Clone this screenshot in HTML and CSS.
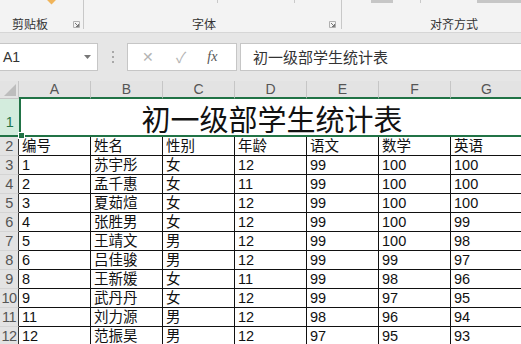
FILE: index.html
```html
<!DOCTYPE html>
<html lang="zh-CN">

<head>
    <meta charset="UTF-8">
    <meta name="viewport" content="width=device-width, initial-scale=1.0">
    <title>初一级部学生统计表</title>

    <link rel="stylesheet" href="styles.css">
</head>

<body>
    <div class="ribbon">
        <div class="group group-clip">
            <div class="stubs"><span class="paste-tip"></span></div>
            <div class="group-foot">
                <span class="label">剪贴板</span>
                <svg class="launcher" width="7" height="7" viewBox="0 0 7 7"><path d="M0.5 6.5V0.5H6.5V6.5Z" fill="none" stroke="#b0b0b0"/><path d="M2 2L5.5 5.5M3 5.5H5.5V3" fill="none" stroke="#777"/></svg>
            </div>
        </div>
        <div class="group group-font">
            <div class="stubs"><span class="tick t1"></span><span class="tick t2"></span></div>
            <div class="group-foot">
                <span class="label">字体</span>
                <svg class="launcher" width="7" height="7" viewBox="0 0 7 7"><path d="M0.5 6.5V0.5H6.5V6.5Z" fill="none" stroke="#b0b0b0"/><path d="M2 2L5.5 5.5M3 5.5H5.5V3" fill="none" stroke="#777"/></svg>
            </div>
        </div>
        <div class="group group-align">
            <div class="stubs"><span class="bar b1"></span><span class="tick t3"></span><span class="bar b2"></span></div>
            <div class="group-foot">
                <span class="label">对齐方式</span>
            </div>
        </div>
    </div>

    <div class="formula-bar">
        <div class="name-box">
            <span>A1</span>
            <svg width="7" height="4" viewBox="0 0 7 4"><path d="M0 0H7L3.5 4Z" fill="#777"/></svg>
        </div>
        <div class="dots"><i></i><i></i><i></i></div>
        <div class="fx-box">
            <span class="fx-cancel">✕</span>
            <span class="fx-ok">✓</span>
            <span class="fx">fx</span>
        </div>
        <div class="fx-input">初一级部学生统计表</div>
    </div>

    <div class="sheet">
        <div class="corner"><svg width="12" height="12" viewBox="0 0 12 12"><path d="M12 0V12H0Z" fill="#bdbdbd"/></svg></div>
        <div class="col-head">A</div>
        <div class="col-head">B</div>
        <div class="col-head">C</div>
        <div class="col-head">D</div>
        <div class="col-head">E</div>
        <div class="col-head">F</div>
        <div class="col-head">G</div>

        <div class="row-head active">1</div>
        <div class="title-cell">初一级部学生统计表</div>

        <div class="row-head">2</div>
        <div class="cell">编号</div><div class="cell">姓名</div><div class="cell">性别</div><div class="cell">年龄</div><div class="cell">语文</div><div class="cell">数学</div><div class="cell">英语</div>

        <div class="row-head">3</div>
        <div class="cell">1</div><div class="cell">苏宇彤</div><div class="cell">女</div><div class="cell">12</div><div class="cell">99</div><div class="cell">100</div><div class="cell">100</div>

        <div class="row-head">4</div>
        <div class="cell">2</div><div class="cell">孟千惠</div><div class="cell">女</div><div class="cell">11</div><div class="cell">99</div><div class="cell">100</div><div class="cell">100</div>

        <div class="row-head">5</div>
        <div class="cell">3</div><div class="cell">夏茹煊</div><div class="cell">女</div><div class="cell">12</div><div class="cell">99</div><div class="cell">100</div><div class="cell">100</div>

        <div class="row-head">6</div>
        <div class="cell">4</div><div class="cell">张胜男</div><div class="cell">女</div><div class="cell">12</div><div class="cell">99</div><div class="cell">100</div><div class="cell">99</div>

        <div class="row-head">7</div>
        <div class="cell">5</div><div class="cell">王靖文</div><div class="cell">男</div><div class="cell">12</div><div class="cell">99</div><div class="cell">100</div><div class="cell">98</div>

        <div class="row-head">8</div>
        <div class="cell">6</div><div class="cell">吕佳骏</div><div class="cell">男</div><div class="cell">12</div><div class="cell">99</div><div class="cell">99</div><div class="cell">97</div>

        <div class="row-head">9</div>
        <div class="cell">8</div><div class="cell">王新媛</div><div class="cell">女</div><div class="cell">11</div><div class="cell">99</div><div class="cell">98</div><div class="cell">96</div>

        <div class="row-head">10</div>
        <div class="cell">9</div><div class="cell">武丹丹</div><div class="cell">女</div><div class="cell">12</div><div class="cell">99</div><div class="cell">97</div><div class="cell">95</div>

        <div class="row-head">11</div>
        <div class="cell">11</div><div class="cell">刘力源</div><div class="cell">男</div><div class="cell">12</div><div class="cell">98</div><div class="cell">96</div><div class="cell">94</div>

        <div class="row-head">12</div>
        <div class="cell">12</div><div class="cell">范振昊</div><div class="cell">男</div><div class="cell">12</div><div class="cell">97</div><div class="cell">95</div><div class="cell">93</div>
    </div>
</body>

</html>
```

FILE: styles.css
```css
* {
    box-sizing: border-box;
}

body {
    margin: 0;
    width: 521px;
    height: 344px;
    overflow: hidden;
    background-color: #fff;
    font-family: "Liberation Sans", "Noto Sans CJK SC", sans-serif;
    color: #222;
}

/* 功能区 */
.ribbon {
    display: flex;
    height: 33px;
    background-color: #f3f3f3;
    border-bottom: 1px solid #d6d6d6;
}

.group {
    height: 29px;
    display: flex;
    flex-direction: column;
    justify-content: space-between;
    border-right: 1px solid #c8c8c8;
}

.group-clip {
    width: 84px;
}

.group-font {
    width: 258px;
}

.group-align {
    flex: 1;
    border-right: none;
}

.stubs {
    display: flex;
    height: 5px;
}

.paste-tip {
    width: 7px;
    height: 7px;
    margin: -4px 0 0 48px;
    background-color: #f0b45a;
    transform: rotate(45deg);
}

.tick {
    width: 1px;
    height: 3px;
    background-color: #c9c9c9;
}

.t1 {
    margin-left: 133px;
}

.t2 {
    margin-left: 76px;
}

.bar {
    height: 3px;
    background-color: #c6c6c6;
}

.b1 {
    width: 22px;
    margin-left: 29px;
}

.t3 {
    margin-left: 27px;
}

.b2 {
    flex: 1;
    margin-left: 56px;
}

.group-foot {
    display: flex;
    align-items: center;
    height: 14px;
    margin-bottom: -2px;
}

.label {
    font-family: "Noto Sans CJK SC", sans-serif;
    font-size: 12px;
    line-height: 14px;
    color: #333;
}

.group-clip .label {
    margin-left: 12px;
}

.group-clip .launcher {
    margin-left: 25px;
}

.group-font .label {
    margin-left: 108px;
}

.group-font .launcher {
    margin-left: 113px;
}

.group-align .label {
    margin-left: 88px;
}

/* 编辑栏 */
.formula-bar {
    display: flex;
    align-items: center;
    height: 48px;
    background-color: #e6e6e6;
    padding-bottom: 1px;
}

.name-box {
    width: 98px;
    height: 28px;
    display: flex;
    align-items: center;
    justify-content: space-between;
    padding: 0 6px 0 3px;
    background-color: #fff;
    border: 1px solid #c6c6c6;
    border-left: none;
    font-size: 14px;
    color: #333;
}

.dots {
    display: flex;
    flex-direction: column;
    gap: 3px;
    margin: 0 13px 0 14px;
}

.dots i {
    width: 2px;
    height: 2px;
    background-color: #a8a8a8;
}

.fx-box {
    width: 110px;
    height: 28px;
    display: flex;
    align-items: center;
    background-color: #fff;
    border: 1px solid #c6c6c6;
    margin-right: 3px;
}

.fx-cancel {
    margin-left: 14px;
    font-size: 14px;
    color: #b4b4b4;
}

.fx-ok {
    margin-left: 22px;
    font-size: 15px;
    color: #b4b4b4;
}

.fx {
    margin-left: 21px;
    font-family: "Liberation Serif", serif;
    font-style: italic;
    font-size: 14px;
    color: #555;
}

.fx-input {
    flex: 1;
    height: 28px;
    display: flex;
    align-items: center;
    padding-left: 12px;
    background-color: #fff;
    border: 1px solid #c6c6c6;
    border-right: none;
    font-family: "Noto Sans CJK SC", sans-serif;
    font-size: 15px;
    color: #333;
}

/* 工作表 */
.sheet {
    display: grid;
    grid-template-columns: 19px repeat(7, 72px);
    grid-template-rows: 18px 38px repeat(11, 19px);
}

.corner {
    display: flex;
    align-items: flex-end;
    justify-content: flex-end;
    padding: 0 2px 2px 0;
    background-color: #e3e3e3;
    border-right: 1px solid #c6c6c6;
    border-bottom: 1px solid #c6c6c6;
}

.col-head {
    display: flex;
    align-items: center;
    justify-content: center;
    background-color: #e3e3e3;
    border-right: 1px solid #c6c6c6;
    border-bottom: 2px solid #217346;
    font-size: 14px;
    color: #555;
}

.row-head {
    display: flex;
    align-items: flex-end;
    justify-content: center;
    padding-bottom: 1px;
    background-color: #e3e3e3;
    border-right: 1px solid #333;
    border-bottom: 1px solid #d4d4d4;
    font-size: 14.5px;
    line-height: 16px;
    color: #555;
    letter-spacing: -0.5px;
}

.row-head.active {
    padding-bottom: 5px;
    background-color: #d3ecdd;
    color: #217346;
    border-right: none;
    border-bottom: 2px solid #217346;
}

.title-cell {
    position: relative;
    grid-column: 2 / span 7;
    display: flex;
    align-items: flex-end;
    justify-content: center;
    padding: 0 0 1px 0;
    border-left: 2px solid #217346;
    border-bottom: 2px solid #217346;
    font-family: "Noto Sans CJK SC", sans-serif;
    font-size: 29px;
    line-height: 31px;
    color: #111;
}

/* 填充柄 */
.title-cell::after {
    content: "";
    position: absolute;
    left: -3px;
    bottom: -4px;
    width: 5px;
    height: 5px;
    background-color: #217346;
    border: 1px solid #fff;
}

.cell {
    display: flex;
    align-items: flex-end;
    padding: 0 0 1px 3px;
    border-right: 1px solid #111;
    border-bottom: 1px solid #111;
    font-size: 14.5px;
    line-height: 16px;
    color: #111;
    white-space: nowrap;
}
```
